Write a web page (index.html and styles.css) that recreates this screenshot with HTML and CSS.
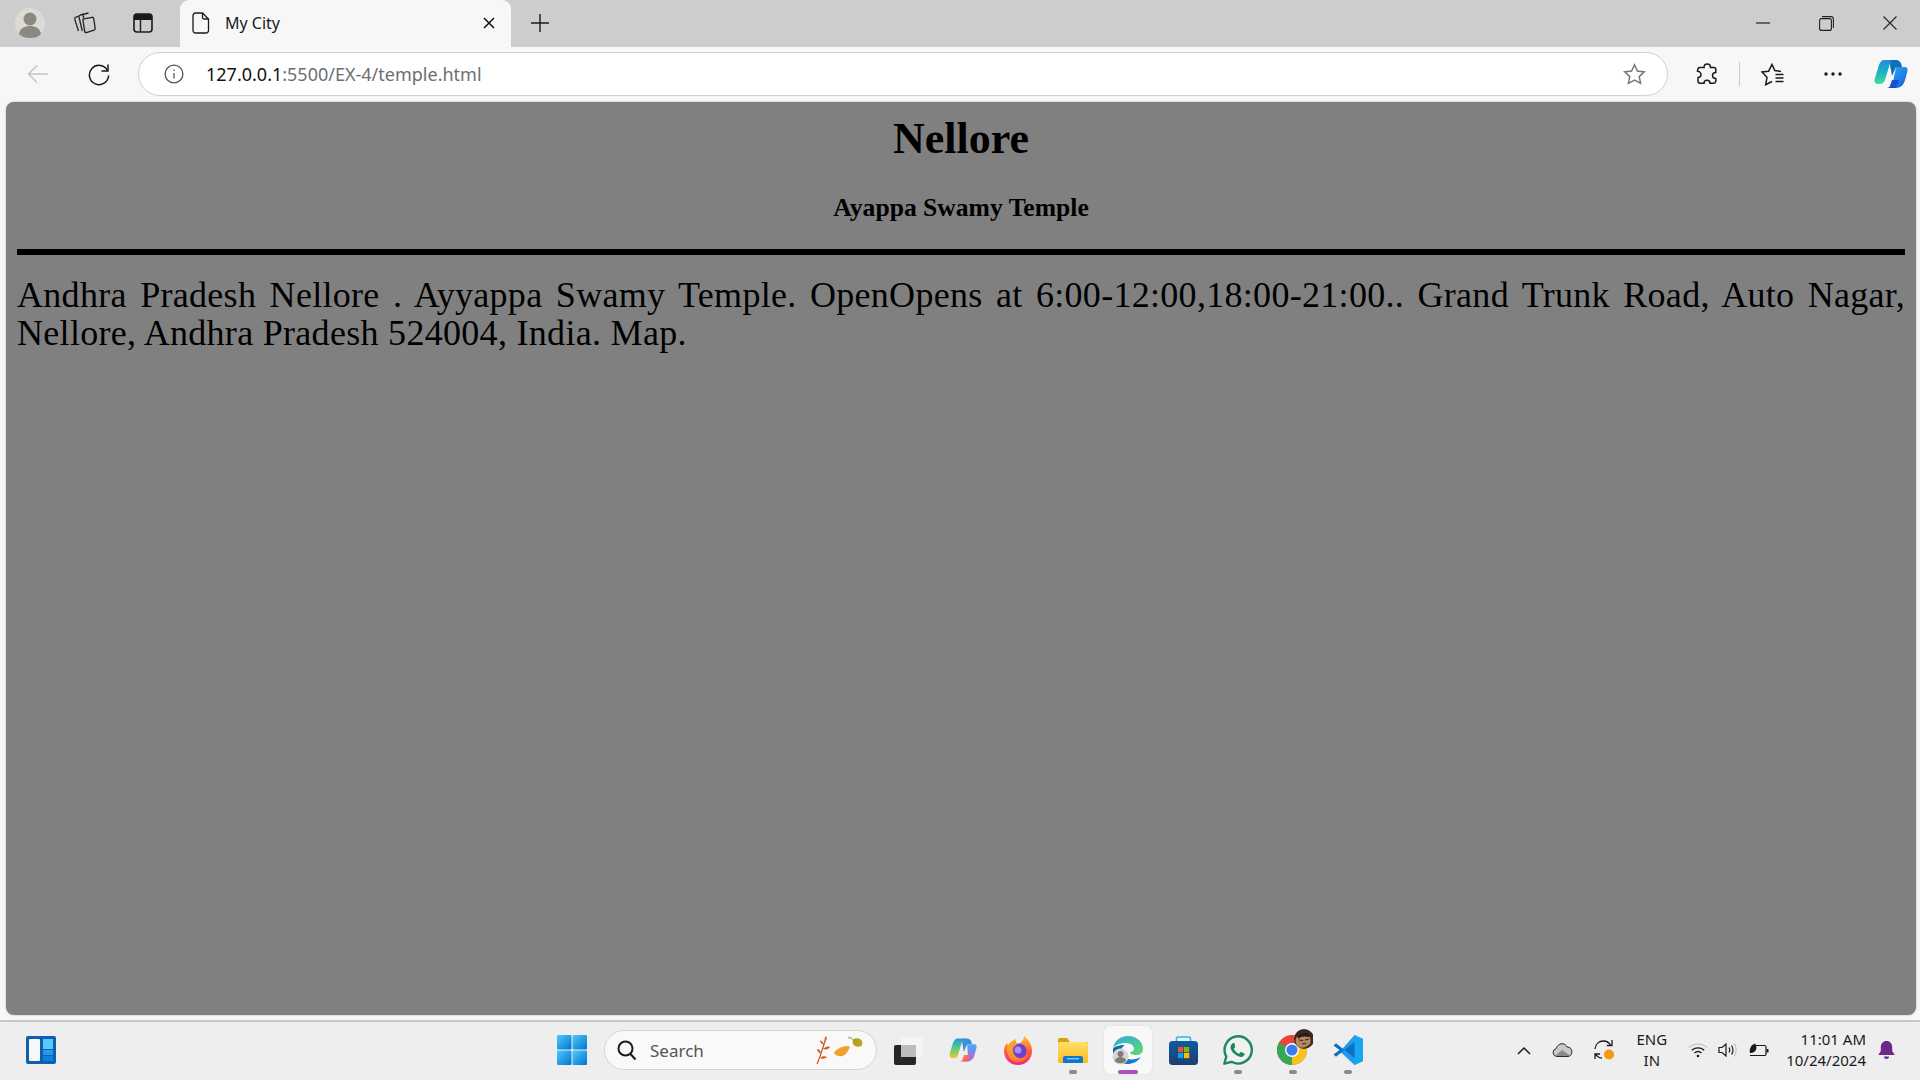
FILE: index.html
```html
<!DOCTYPE html>
<html lang="en">
<head>
    <meta charset="UTF-8">
    <title>My City</title>
    <link rel="stylesheet" href="styles.css">
</head>
<body>
    <svg class="defs" width="0" height="0">
        <defs>
            <linearGradient id="copA" x1="0" y1="0" x2="0" y2="1"><stop offset="0" stop-color="#1b8fd8"/><stop offset=".55" stop-color="#1fb4c4"/><stop offset="1" stop-color="#45e08e"/></linearGradient>
            <linearGradient id="copB" x1="0" y1="0" x2="1" y2="1"><stop offset="0" stop-color="#2fb0f2"/><stop offset=".6" stop-color="#1f7fe8"/><stop offset="1" stop-color="#1a4fd0"/></linearGradient>
            <linearGradient id="copC" x1="0" y1="0" x2="0" y2="1"><stop offset="0" stop-color="#3bb4f0"/><stop offset=".55" stop-color="#8a7be8"/><stop offset="1" stop-color="#d85fc8"/></linearGradient>
            <linearGradient id="copD" x1="0" y1="0" x2="0" y2="1"><stop offset="0" stop-color="#1f9ae0"/><stop offset=".55" stop-color="#62d06e"/><stop offset="1" stop-color="#f6c343"/></linearGradient>
            <linearGradient id="copE" x1="0" y1="0" x2="1" y2="1"><stop offset="0" stop-color="#f8a040"/><stop offset="1" stop-color="#ee4a6a"/></linearGradient>
            <linearGradient id="ffA" x1="0" y1="0" x2="0" y2="1"><stop offset="0" stop-color="#ffc22e"/><stop offset=".55" stop-color="#ff5a3c"/><stop offset="1" stop-color="#f0268a"/></linearGradient>
            <linearGradient id="ffB" x1="0" y1="0" x2="1" y2="1"><stop offset="0" stop-color="#ffb02e"/><stop offset="1" stop-color="#ff6a2a"/></linearGradient>
            <linearGradient id="edgeA" x1="0" y1="0" x2="1" y2="1"><stop offset="0" stop-color="#2fa8e0"/><stop offset="1" stop-color="#5edc6c"/></linearGradient>
            <linearGradient id="edgeB" x1="0" y1="0" x2="1" y2="0"><stop offset="0" stop-color="#0c5aa8"/><stop offset="1" stop-color="#1f8ad8"/></linearGradient>
            <linearGradient id="startA" x1="0" y1="0" x2="1" y2="1"><stop offset="0" stop-color="#4fc9fb"/><stop offset="1" stop-color="#0274d0"/></linearGradient>
            <linearGradient id="folderA" x1="0" y1="0" x2="0" y2="1"><stop offset="0" stop-color="#ffdf6e"/><stop offset="1" stop-color="#fbbc1c"/></linearGradient>
            <linearGradient id="storeA" x1="0" y1="0" x2="0" y2="1"><stop offset="0" stop-color="#0f5aa0"/><stop offset="1" stop-color="#1d3f72"/></linearGradient>
        </defs>
    </svg>

    <div class="tabstrip">
        <div class="strip-left">
            <svg class="avatar" width="30" height="30" viewBox="0 0 30 30"><circle cx="15" cy="15" r="15" fill="#dcdad4"/><circle cx="15" cy="11" r="6.5" fill="#8b8781"/><path d="M4 26c1-6 6-8 11-8s10 2 11 8c-3 3-7 4-11 4s-8-1-11-4z" fill="#8b8781"/></svg>
            <svg class="collections" width="24" height="24" viewBox="0 0 24 24" fill="none" stroke="#222" stroke-width="1.300"><path d="M11 8.200 20 6.300c.9-.2 1.500.3 1.700 1.100l1.500 10c.1.900-.3 1.500-1.100 1.700l-7.700 2.400c-.9.200-1.500-.2-1.700-1L11 9.500c-.2-.6-.2-1.100 0-1.300z" transform="translate(-1 0)"/><path d="M6 5 3 6.200c-1 .4-1.500 1.200-1.200 2.200L5.500 20"/><path d="M11 3 7.300 4c-1 .3-1.500 1-1.300 2l3.300 14"/><path d="M15.500 2 11.500 3c-1 .3-1.500 1-1.300 2l.5 2"/></svg>
            <svg class="vtabs" width="20" height="20" viewBox="0 0 20 20"><rect x="1" y="1" width="18" height="18" rx="3" fill="none" stroke="#1a1a1a" stroke-width="1.600"/><path d="M1 4a3 3 0 0 1 3-3h12a3 3 0 0 1 3 3v3H1z" fill="#1a1a1a"/><path d="M7.500 7v12" stroke="#1a1a1a" stroke-width="1.400"/></svg>
        </div>
        <div class="tab">
            <svg class="tab-icon" width="18" height="22" viewBox="0 0 18 22" fill="none" stroke="#1a1a1a" stroke-width="1.300"><path d="M3.500 1h7l6 6v11.500a2.500 2.500 0 0 1-2.500 2.500H3.500A2.500 2.500 0 0 1 1 18.500v-15A2.500 2.500 0 0 1 3.500 1z"/><path d="M10.500 1v4.500A1.500 1.500 0 0 0 12 7h4.500"/></svg>
            <span class="tab-title">My City</span>
            <svg class="tab-close" width="12" height="12" viewBox="0 0 12 12" stroke="#111" stroke-width="1.500"><path d="M1 1l10 10M11 1 1 11"/></svg>
        </div>
        <svg class="new-tab" width="20" height="20" viewBox="0 0 20 20" stroke="#1a1a1a" stroke-width="1.400"><path d="M10 1v18M1 10h18"/></svg>
        <div class="win-controls">
            <svg width="14" height="14" viewBox="0 0 14 14" stroke="#222" stroke-width="1.200"><path d="M0 7h14"/></svg>
            <svg width="15" height="15" viewBox="0 0 15 15" fill="none" stroke="#222" stroke-width="1.100"><rect x=".6" y="2.600" width="11.800" height="11.800" rx="2"/><path d="M3 .6h9a2.500 2.500 0 0 1 2.400 2.400v9"/></svg>
            <svg width="14" height="14" viewBox="0 0 14 14" stroke="#222" stroke-width="1.100"><path d="M.5.500l13 13M13.500.5l-13 13"/></svg>
        </div>
    </div>

    <div class="toolbar">
        <svg class="tool-back" width="22" height="20" viewBox="0 0 22 20" fill="none" stroke="#c4c4c4" stroke-width="1.500"><path d="M21 10H1.500M10 1.500 1.500 10l8.500 8.500"/></svg>
        <svg class="tool-reload" width="22" height="23" viewBox="0 0 22 23" fill="none" stroke="#1a1a1a" stroke-width="1.500"><path d="M19.500 7.500A9.600 9.600 0 1 0 20.600 12.500"/><path d="M20 1.500v6.500h-6.500"/></svg>
        <div class="address">
            <svg class="info" width="20" height="20" viewBox="0 0 20 20" fill="none" stroke="#555" stroke-width="1.300"><circle cx="10" cy="10" r="8.900"/><path d="M10 9v5.500M10 5.500v1.400"/></svg>
            <span class="url"><span class="url-host">127.0.0.1</span>:5500/EX-4/temple.html</span>
            <svg class="star" width="23" height="22" viewBox="0 0 23 22" fill="none" stroke="#777" stroke-width="1.500"><path d="M11.500 1.800l2.900 6.300 6.900.8-5.100 4.700 1.400 6.800-6.100-3.400-6.100 3.400 1.400-6.800L1.700 8.900l6.900-.8z"/></svg>
        </div>
        <svg class="tool-ext" width="22" height="23" viewBox="0 0 22 23" fill="none" stroke="#1a1a1a" stroke-width="1.500"><path d="M8 4.500C8 2.500 9.500 1 11.300 1s3.200 1.500 3.200 3.500h3.500c1 0 1.800.8 1.800 1.800v3.200c-1.900 0-3.300 1.300-3.300 3s1.400 3 3.300 3c.4 2.800-.6 4.800-1.800 4.800h-4c0-2-1.300-3-3-3s-3 1-3 3H4c-1.200 0-2-.8-2-2v-3.800c1.700 0 3-1.100 3-2.700S3.700 8.200 1.500 8.200c0-2 1-3.700 2.500-3.700z"/></svg>
        <span class="tool-sep"></span>
        <svg class="tool-fav" width="24" height="23" viewBox="0 0 24 23" fill="none" stroke="#1a1a1a" stroke-width="1.500"><path d="M11 18.500 4.700 21.700 6 14.300 1 9l6.600-.8L11 1.500l2.800 6.100 6.200.9"/><path d="M14.500 11.500h8M14.500 15h8M14.500 18.500h8"/></svg>
        <svg class="tool-more" width="18" height="4" viewBox="0 0 18 4" fill="#1a1a1a"><circle cx="2" cy="2" r="1.700"/><circle cx="9" cy="2" r="1.700"/><circle cx="16" cy="2" r="1.700"/></svg>
        <svg class="tool-copilot" width="34" height="30" viewBox="0 0 34 30"><path d="M10 1h11c-3 0-4.500 2-5.500 5L11 21c-1 3-3 4-5 4H4c-2.500 0-4-2-3.300-5L5 6c1-3 3-5 5-5z" fill="url(#copA)"/><path d="M17 1h5c3 0 5 2 5.500 5l.5 2h-6l-4 9-2-11c.2-2 .5-4 1-5z" fill="#0f6fb8"/><path d="M22 8h9c2 0 3 2 2.500 4L31 21c-1 5-5 8-9 8H13c3 0 5-2 6-6z" fill="url(#copB)"/><path d="M13 29h9l3-8H18l-1 3c-.7 3-2 5-4 5z" fill="#1a4fd0"/></svg>
    </div>

    <div class="viewport">
        <main class="page">
            <h1>Nellore</h1>
            <h2>Ayappa Swamy Temple</h2>
            <hr>
            <p>Andhra Pradesh Nellore . Ayyappa Swamy Temple. OpenOpens at 6:00-12:00,18:00-21:00.. Grand Trunk Road, Auto Nagar, Nellore, Andhra Pradesh 524004, India. Map.</p>
        </main>
    </div>

    <footer class="taskbar">
        <div class="task-left">
            <svg width="30" height="28" viewBox="0 0 30 28"><rect width="30" height="28" rx="2" fill="#0f5fb0"/><rect x="3" y="3" width="11" height="22" rx="1" fill="#f5f7fa"/><rect x="17" y="3" width="10" height="10" fill="#5cc8fa"/><rect x="17" y="14" width="10" height="5" fill="#1e9cf0"/><rect x="17" y="20" width="10" height="5" fill="#0f7fdc"/></svg>
        </div>
        <div class="task-center">
            <div class="task-btn">
                <svg width="30" height="30" viewBox="0 0 30 30" fill="url(#startA)"><rect width="14.500" height="14.500" rx="1"/><rect x="15.500" width="14.500" height="14.500" rx="1"/><rect y="15.500" width="14.500" height="14.500" rx="1"/><rect x="15.500" y="15.500" width="14.500" height="14.500" rx="1"/></svg>
            </div>
            <div class="search">
                <svg width="20" height="21" viewBox="0 0 20 21" fill="none" stroke="#1c1c1c" stroke-width="2"><circle cx="8.500" cy="8.500" r="7"/><path d="M13.500 14l5 5.500"/></svg>
                <span class="search-text">Search</span>
                <svg class="search-art" width="62" height="30" viewBox="0 0 62 30"><path d="M3 29C7 20 9 12 12 3" fill="none" stroke="#c8501a" stroke-width="1.200"/><path d="M11 6c-1-2 0-4 1-5 1 2 1 4-1 5zM10 10C7 9 6 7 6 5c2 1 4 3 4 5zM9 14c2-2 5-3 7-2-1 2-4 3-7 2zM7 19c-2-1-4-3-4-5 2 0 4 2 4 5zM6 23c2-2 5-2 7-1-2 2-5 2-7 1z" fill="#d4591c"/><path d="M20 18c2-4 8-7 14-7 3 0 1 3 0 5-2 4-6 6-9 5-2 0-4-1-5-3z" fill="#f2a02c"/><path d="M39 5c1-2 5-2 7-1s3 4 2 6-5 2-7 1-3-4-2-6z" fill="#b8a222"/><path d="M34 3c2-1 4 0 6 3" fill="none" stroke="#7a8a30" stroke-width="1"/></svg>
            </div>
            <div class="task-btn">
                <svg width="30" height="29" viewBox="0 0 30 29"><rect x="1" y="9" width="22" height="20" rx="2" fill="#262626"/><rect x="8" y="1" width="22" height="20" rx="2" fill="#f4f4f4" fill-opacity=".85"/><rect x="8" y="9" width="15" height="12" fill="#bcbcbc"/></svg>
            </div>
            <div class="task-btn">
                <svg width="28" height="26" viewBox="0 0 34 30"><path d="M10 1h11c-3 0-4.500 2-5.500 5L11 21c-1 3-3 4-5 4H4c-2.500 0-4-2-3.300-5L5 6c1-3 3-5 5-5z" fill="url(#copD)"/><path d="M17 1h5c3 0 5 2 5.500 5l.5 2h-6l-4 9-2-11c.2-2 .5-4 1-5z" fill="#3d8fe0"/><path d="M22 8h9c2 0 3 2 2.500 4L31 21c-1 5-5 8-9 8h-3c3 0 4-3 4-6z" fill="url(#copC)"/><path d="M13 29h9l3-8H18l-1 3c-.7 3-2 5-4 5z" fill="url(#copE)"/></svg>
            </div>
            <div class="task-btn">
                <svg width="28" height="29" viewBox="0 0 28 29"><path d="M20 0c5 4 8 9 8 15 0 8-6 14-14 14S0 23 0 15c0-3 1-6 3-8l1 3c2-4 5-6 8-7-1 2 0 4 2 5 3-1 6-4 6-8z" fill="url(#ffA)"/><circle cx="15" cy="15" r="7.500" fill="#6b3fd4"/><circle cx="14" cy="14" r="3.500" fill="#a98cf0"/><path d="M3 11c2-4 5-6 8-7-1 2 0 4 3 5-3 0-5 2-5 5 0 5 4 9 9 8 4-1 6-4 6-7 1 5-3 11-10 11S2 19 3 11z" fill="url(#ffB)"/></svg>
            </div>
            <div class="task-btn">
                <svg width="30" height="26" viewBox="0 0 30 26"><path d="M0 3a2 2 0 0 1 2-2h7l3 4h18v4H0z" fill="#d99f0e"/><rect y="5" width="30" height="21" rx="1.500" fill="url(#folderA)"/><path d="M5 26v-5a2 2 0 0 1 2-2h16a2 2 0 0 1 2 2v5z" fill="#0f78c8"/><rect x="9" y="21" width="12" height="1.400" fill="#7cc6f0"/></svg>
                <span class="run-mark"></span>
            </div>
            <div class="task-btn task-active">
                <svg width="32" height="30" viewBox="0 0 32 30"><path d="M1 14C2 6 8 1 16 1c9 0 15 6 15 13 0 4-3 6-7 6-3 0-6-1-6-3 3 0 4-2 4-3 0-4-4-6-9-6-6 0-11 3-12 6z" fill="url(#edgeA)"/><path d="M1 14c-1 8 5 15 14 15 6 0 10-2 14-7-4 2-9 3-13 2-5-1-8-5-7-9 .4-2 2-4 4-5-6 0-11 2-12 4z" fill="url(#edgeB)"/><circle cx="8.500" cy="21.500" r="8" fill="#d6d5d2"/><circle cx="8.500" cy="19" r="3" fill="#7e7c78"/><path d="M2.800 26c.6-3 3-4 5.700-4s5 1 5.700 4c-3 3-8.500 3-11.400 0z" fill="#7e7c78"/></svg>
                <span class="run-mark run-active"></span>
            </div>
            <div class="task-btn">
                <svg width="29" height="29" viewBox="0 0 29 29"><rect x="0" y="5" width="29" height="24" rx="3.500" fill="url(#storeA)"/><path d="M7.500 5V2.500A1.500 1.500 0 0 1 9 1h11a1.500 1.500 0 0 1 1.500 1.500V5" fill="none" stroke="#29b6f0" stroke-width="1.600"/><rect x="9" y="11" width="5.200" height="5.200" fill="#f25022"/><rect x="15" y="11" width="5.200" height="5.200" fill="#7fba00"/><rect x="9" y="17" width="5.200" height="5.200" fill="#00a4ef"/><rect x="15" y="17" width="5.200" height="5.200" fill="#ffb900"/></svg>
            </div>
            <div class="task-btn">
                <svg width="30" height="30" viewBox="0 0 30 30"><path d="M1.300 28.700l2-7.200A13.600 13.600 0 1 1 8.600 26.800z" fill="#f1f1f1" stroke="#1b8a5a" stroke-width="2.400" stroke-linejoin="round"/><path d="M10.700 8c-.5 0-1.300.2-1.900 1-.7.900-1.400 2-1.300 3.400.2 2.300 1.700 4.500 3.500 6.200 2 1.900 4.400 3.200 6.800 3.400 1.300.1 2.600-.6 3.300-1.500.4-.6.500-1.500.4-1.900l-3.400-1.700c-.3 0-.5.100-.7.300l-1.300 1.600c-2.500-1-4.300-2.800-5.300-5.100l1.200-1.400c.2-.2.200-.5.100-.8L11.500 8.300c-.2-.3-.5-.3-.8-.3z" fill="#1b8a5a"/></svg>
                <span class="run-mark"></span>
            </div>
            <div class="task-btn">
                <svg class="chrome" width="40" height="42" viewBox="0 0 40 42"><g transform="translate(4 6)"><circle cx="15" cy="15" r="15" fill="#e8453c"/><path d="M15 15 28 7.500A15 15 0 0 1 15 30z" fill="#f8c21c"/><path d="M15 15 15 30A15 15 0 0 1 2 7.500z" fill="#34a853"/><circle cx="15" cy="15" r="7" fill="#fff"/><circle cx="15" cy="15" r="5.600" fill="#3a7bf0"/></g><g transform="translate(6 1)"><circle cx="25" cy="9" r="10" fill="#3a2a22"/><path d="M17 8c3-3 8-4 13-2 2 2 2 6 1 8-3 3-8 5-12 3-2-2-3-6-2-9z" fill="#b98664"/><path d="M19 6c4-4 10-4 13 0l-3 1c-3-1-7-1-10 2z" fill="#2a1c16"/><path d="M20 10l4 .5M26 10l4-1M23 14l4-.5" stroke="#3a2a22" stroke-width="1.200"/></g></svg>
                <span class="run-mark"></span>
            </div>
            <div class="task-btn">
                <svg width="30" height="30" viewBox="0 0 30 30"><path d="M21.500 0 30 4v22l-8.500 4L7 16.500z" fill="#1f9cf0"/><path d="M21.500 0v30L30 26V4z" fill="#1aa6ef"/><path d="M21.500 7v16L3 8.300.5 10.500 6.500 15 .5 19.500 3 21.700 21.500 7z" fill="#0a72c4"/></svg>
                <span class="run-mark"></span>
            </div>
        </div>
        <div class="tray">
            <svg class="tray-chevron" width="14" height="9" viewBox="0 0 14 9" fill="none" stroke="#1a1a1a" stroke-width="1.500"><path d="M1 8l6-6 6 6"/></svg>
            <svg class="tray-cloud" width="21" height="14" viewBox="0 0 21 14"><path d="M5 13.500a4 4 0 0 1-.8-7.900C5 2.700 7.400.7 10 .7c2.500 0 4.300 1.400 5 3.300a4.800 4.800 0 0 1 1 9.500z" fill="#c9c9c9" stroke="#2a2a2a" stroke-width="1"/><path d="M3 13l7-6 9 6z" fill="#8a8a8a"/></svg>
            <svg class="tray-sync" width="21" height="22" viewBox="0 0 21 22" fill="none" stroke="#1a1a1a" stroke-width="1.300"><path d="M1 10C1.500 5 5 2 9.500 2c3 0 5.500 1.500 7 4M18 1v5.500h-5M1 20v-5h5M1.500 15c1.500 2.500 4 4 6.500 4"/><circle cx="15" cy="15.500" r="5" fill="#f59a0c" stroke="none"/></svg>
            <div class="tray-lang"><span>ENG</span><span>IN</span></div>
            <svg class="tray-wifi" width="20" height="16" viewBox="0 0 20 16" fill="none" stroke="#1a1a1a" stroke-width="1.300"><path d="M1 5.500C6 1 14 1 19 5.500" stroke="#c4c4c4"/><path d="M3.800 8.200c3.500-3 9-3 12.400 0M6.500 11c2-1.700 5-1.700 7 0"/><circle cx="10" cy="14" r="1.300" fill="#1a1a1a" stroke="none"/></svg>
            <svg class="tray-vol" width="20" height="16" viewBox="0 0 20 16" fill="none" stroke="#1a1a1a" stroke-width="1.200"><path d="M1 5.500h3L8 2v12L4 10.500H1z"/><path d="M11 5.500c1 1.500 1 3.500 0 5M13.500 3.500c2 2.500 2 6.500 0 9"/><path d="M16 1.500c3 3.500 3 9.500 0 13" stroke="#c4c4c4"/></svg>
            <svg class="tray-bat" width="21" height="15" viewBox="0 0 21 15" fill="none" stroke="#1a1a1a" stroke-width="1.200"><path d="M7 2.500h9.500a1.500 1.500 0 0 1 1.500 1.500v7a1.500 1.500 0 0 1-1.500 1.500H2"/><rect x="18.500" y="6" width="2" height="3.500" fill="#1a1a1a" stroke="none"/><path d="M2 10C1 6 3 2 7 .5c2 2 2 7-1 8.500-1 .5-2 1-4 1z" fill="#1a1a1a" stroke="none"/></svg>
            <div class="tray-clock"><span>11:01 AM</span><span>10/24/2024</span></div>
            <svg class="tray-bell" width="17" height="19" viewBox="0 0 17 19" fill="#6b2a8a"><path d="M8.500 0c3.500 0 5.700 2.700 5.700 6v4l2.500 4H.3l2.500-4V6c0-3.300 2.200-6 5.700-6z"/><path d="M6 15.500h5a2.500 2.500 0 0 1-5 0z"/></svg>
        </div>
    </footer>
</body>
</html>
```

FILE: styles.css
```css
* {
    box-sizing: border-box;
}

html, body {
    margin: 0;
    height: 100%;
}

body {
    display: flex;
    flex-direction: column;
    height: 1080px;
    overflow: hidden;
    background-color: #f7f7f7;
    font-family: "Noto Sans", "Open Sans", sans-serif;
    color: #1a1a1a;
}

svg {
    display: block;
    flex: none;
}

.defs {
    position: absolute;
}

/* tab strip */
.tabstrip {
    display: flex;
    align-items: center;
    height: 47px;
    background-color: #cdcdcd;
}

.strip-left {
    display: flex;
    align-items: center;
    width: 180px;
    padding-left: 15px;
    padding-bottom: 1px;
}

.collections {
    margin-left: 28px;
}

.vtabs {
    margin-left: 36px;
}

.tab {
    display: flex;
    align-items: center;
    align-self: stretch;
    width: 331px;
    padding: 0 16px 1px 12px;
    background-color: #f7f7f7;
    border-radius: 9px 9px 0 0;
}

.tab-title {
    margin-left: 15px;
    font-size: 16px;
    flex: 1;
}

.new-tab {
    margin-left: 19px;
    margin-bottom: 1px;
}

.win-controls {
    display: flex;
    align-items: center;
    gap: 49px;
    margin-left: auto;
    padding-right: 23px;
    padding-bottom: 1px;
}

/* toolbar */
.toolbar {
    display: flex;
    align-items: center;
    height: 55px;
    padding-right: 12px;
    padding-bottom: 1px;
}

.tool-back {
    margin-left: 27px;
}

.tool-reload {
    margin-left: 39px;
}

.address {
    display: flex;
    align-items: center;
    width: 1533px;
    height: 44px;
    margin-left: 28px;
    padding: 0 21px 0 25px;
    background-color: #fff;
    border: 1.5px solid #d0d0d0;
    border-radius: 22px;
}

.url {
    margin-left: 22px;
    flex: 1;
    font-size: 18px;
    color: #6e6e6e;
}

.url-host {
    color: #111;
}

.tool-ext {
    margin-left: 28px;
}

.tool-sep {
    width: 1px;
    height: 24px;
    margin-left: 21px;
    background-color: #c8c8c8;
}

.tool-fav {
    margin-left: 21px;
}

.tool-more {
    margin-left: 39px;
}

.tool-copilot {
    margin-left: 32px;
}

/* page */
.viewport {
    flex: 1;
    display: flex;
    padding: 0 4px 5px 6px;
}

.page {
    flex: 1;
    padding: 0 11px;
    background-color: #808080;
    border-radius: 8px;
    color: #000;
    font-family: "Liberation Serif", serif;
    box-shadow: 0 0 2px rgba(0, 0, 0, 0.3);
}

.page h1 {
    margin: 12px 0 0;
    font-size: 44px;
    line-height: 50px;
    text-align: center;
}

.page h2 {
    margin: 29px 0 0;
    font-size: 25.6px;
    line-height: 29px;
    text-align: center;
}

.page hr {
    height: 6px;
    margin: 27px 0 0;
    background-color: #000;
    border: 0;
}

.page p {
    margin: 22px 0 0;
    font-size: 36px;
    line-height: 37.5px;
    letter-spacing: 0.3px;
    text-align: justify;
}

/* taskbar */
.taskbar {
    display: grid;
    grid-template-columns: 548px auto 1fr;
    align-items: center;
    height: 60px;
    padding-bottom: 2px;
    background-color: #eeeeee;
    border-top: 2px solid #c8c8c8;
}

.task-left {
    padding-left: 26px;
}

.task-center {
    display: flex;
    align-items: center;
    gap: 7px;
}

.task-btn {
    position: relative;
    display: flex;
    align-items: center;
    justify-content: center;
    width: 48px;
    height: 48px;
}

.task-active {
    background-color: #f8f8f8;
    border-radius: 5px;
    box-shadow: 0 0 1px rgba(0, 0, 0, 0.25);
}

.run-mark {
    position: absolute;
    left: 20px;
    bottom: 0;
    width: 8px;
    height: 4px;
    background-color: #8a8a8a;
    border-radius: 2px;
}

.run-active {
    left: 14px;
    width: 20px;
    background-color: #a94fc4;
}

.search {
    display: flex;
    align-items: center;
    width: 273px;
    height: 40px;
    margin-left: 1px;
    padding: 0 0 0 12px;
    background-color: #f9f9f9;
    border: 1px solid #d6d6d6;
    border-radius: 20px;
}

.search-text {
    margin-left: 13px;
    flex: 1;
    font-size: 17px;
    color: #555;
}

.tray {
    display: flex;
    align-items: center;
    justify-content: flex-end;
    padding-right: 25px;
    font-size: 15px;
}

.tray-lang,
.tray-clock {
    display: flex;
    flex-direction: column;
    gap: 0;
    line-height: 21px;
}

.tray-lang {
    align-items: center;
    margin-left: 22px;
}

.tray-clock {
    align-items: flex-end;
    margin-left: 17px;
}

.tray-cloud {
    margin-left: 21px;
}

.tray-sync {
    margin-left: 21px;
}

.tray-wifi {
    margin-left: 21px;
}

.tray-vol {
    margin-left: 10px;
}

.tray-bat {
    margin-left: 10px;
}

.tray-bell {
    margin-left: 12px;
}
```
